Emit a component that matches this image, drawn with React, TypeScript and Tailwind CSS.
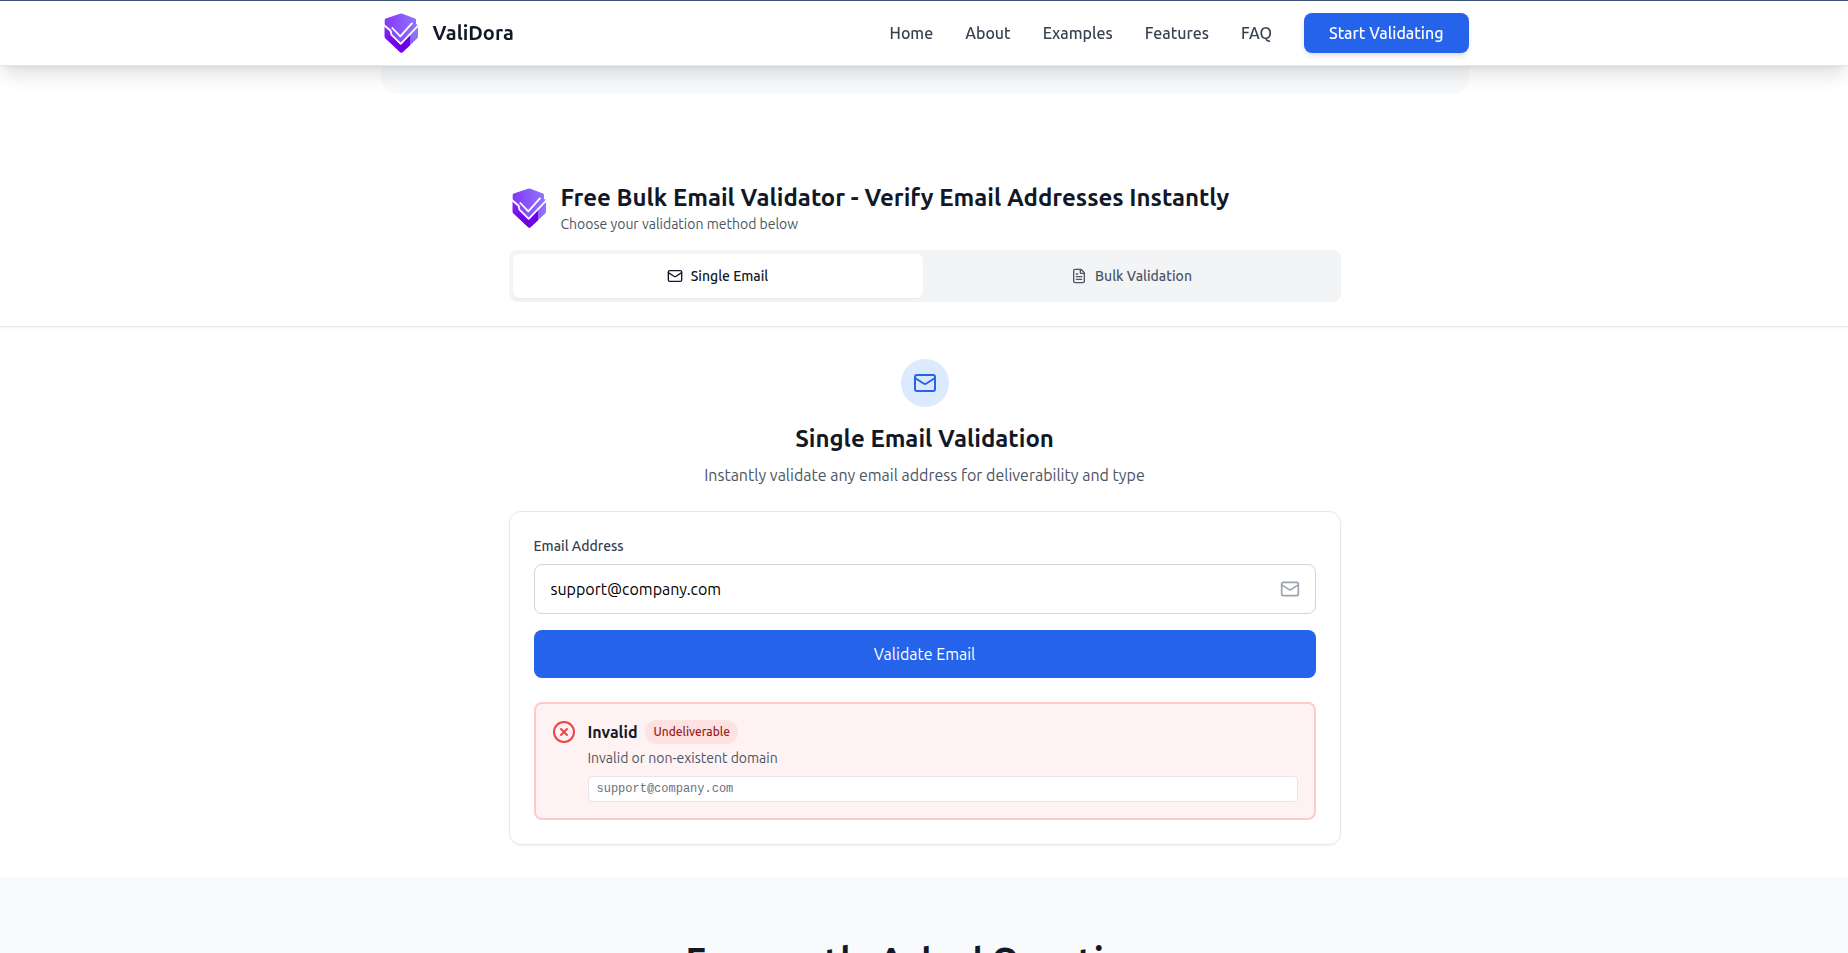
import { useId } from "react";
import { CircleX, FileText, Mail } from "lucide-react";

const navLinks = ["Home", "About", "Examples", "Features", "FAQ"];

function Logo() {
  const id = useId();
  return (
    <svg viewBox="0 0 40 40" className="size-10 shrink-0" aria-hidden="true">
      <defs>
        <linearGradient id={`${id}-top`} x1="0" y1="0.3" x2="1" y2="0.2">
          <stop offset="0" stopColor="#8238f8" />
          <stop offset="1" stopColor="#9277ff" />
        </linearGradient>
        <linearGradient id={`${id}-low`} x1="0" y1="0" x2="0.6" y2="1">
          <stop offset="0" stopColor="#8a2bf5" />
          <stop offset="0.7" stopColor="#7200e6" />
        </linearGradient>
      </defs>
      <path
        d="M19 .8a3 3 0 0 1 2.4 0L34 5.4a1.5 1.5 0 0 1 1 1.4V11l2 1v11.8a2 2 0 0 1-.6 1.4L21.8 39.1a2 2 0 0 1-2.8 0L4.3 25.2a2 2 0 0 1-.6-1.4V7a1.5 1.5 0 0 1 1-1.4Z"
        fill={`url(#${id}-top)`}
      />
      <path
        d="M3.7 13 9.7 20l10 11L29 22v10.3L21.8 39.1a2 2 0 0 1-2.8 0L4.3 25.2a2 2 0 0 1-.6-1.4Z"
        fill={`url(#${id}-low)`}
      />
      <g fill="none" stroke="#fff" strokeWidth="1.8" strokeLinecap="round" strokeLinejoin="round">
        <path d="M3.2 12.2 9.6 17.8 10.4 21.6 19.7 30.8 37.4 12.4" />
        <path d="M11.3 15 19.3 23.4 30.9 10.4" />
      </g>
    </svg>
  );
}

export default function App() {
  return (
    <div className="h-screen overflow-hidden bg-white font-[Ubuntu,'Open_Sans',sans-serif] text-base text-[#111827]">
      <header className="sticky top-0 z-10 border-t border-b border-t-[#3a5377] border-b-[#e5e7eb] bg-white pl-px shadow-[0_12px_18px_-3px_rgb(0_0_0/0.12),0_4px_6px_-4px_rgb(0_0_0/0.1)]">
        <div className="mx-auto flex h-16 max-w-6xl items-center justify-between px-8">
          <a href="#home" className="flex items-center gap-3 text-xl font-semibold">
            <Logo />
            ValiDora
          </a>
          <nav className="flex items-center gap-8 font-medium text-[#374151]">
            {navLinks.map((label) => (
              <a key={label} href={`#${label.toLowerCase()}`}>
                {label}
              </a>
            ))}
            <button
              type="button"
              className="rounded-lg bg-[#2563eb] px-[25px] py-2 text-white shadow-md"
            >
              Start Validating
            </button>
          </nav>
        </div>
      </header>

      <main>
        <section className="pb-16 pl-px">
          <div className="mx-auto max-w-6xl px-8">
            <div className="h-7 rounded-b-2xl bg-slate-50" />
          </div>
        </section>

        <section className="border-b border-[#e5e7eb] py-6 pl-px shadow-xs">
          <div className="mx-auto max-w-4xl px-8">
            <div className="mb-4 flex items-center gap-3">
              <Logo />
              <div>
                <h1 className="text-2xl font-semibold">
                  Free Bulk Email Validator - Verify Email Addresses Instantly
                </h1>
                <p className="text-sm text-[#4b5563]">Choose your validation method below</p>
              </div>
            </div>
            <div role="tablist" className="flex gap-1 rounded-lg bg-[#f3f4f6] p-1 text-sm font-medium">
              <button
                type="button"
                role="tab"
                aria-selected="true"
                className="flex flex-1 items-center justify-center gap-2 rounded-md bg-white py-3 shadow-xs"
              >
                <Mail className="size-4" />
                Single Email
              </button>
              <button
                type="button"
                role="tab"
                aria-selected="false"
                className="flex flex-1 items-center justify-center gap-2 rounded-md py-3 text-[#4b5563]"
              >
                <FileText className="size-4" />
                Bulk Validation
              </button>
            </div>
          </div>
        </section>

        <section className="py-8 pl-px">
          <div className="mx-auto max-w-4xl px-8">
            <div className="mb-6 flex flex-col items-center text-center">
              <div className="mb-4 flex size-12 items-center justify-center rounded-full bg-[#dbeafe] text-[#2563eb]">
                <Mail className="size-6" />
              </div>
              <h2 className="mb-2 text-2xl font-semibold">Single Email Validation</h2>
              <p className="text-[#4b5563]">
                Instantly validate any email address for deliverability and type
              </p>
            </div>

            <div className="rounded-xl border border-[#e5e7eb] p-6 shadow-xs">
              <form onSubmit={(e) => e.preventDefault()}>
                <label htmlFor="email" className="mb-2 block text-sm font-medium text-[#374151]">
                  Email Address
                </label>
                <div className="relative mb-4">
                  <input
                    id="email"
                    type="email"
                    defaultValue="support@company.com"
                    className="block w-full rounded-lg border border-[#d1d5db] py-3 pr-12 pl-4 text-black"
                  />
                  <Mail className="absolute inset-y-0 right-4 my-auto size-5 text-[#9ca3af]" />
                </div>
                <button type="submit" className="block w-full rounded-lg bg-[#2563eb] py-3 text-white">
                  Validate Email
                </button>
              </form>

              <div
                role="alert"
                className="mt-6 flex items-start gap-3 rounded-lg border-2 border-[#fecaca] bg-[#fef2f2] p-4"
              >
                <CircleX className="size-6 shrink-0 text-[#ef4444]" />
                <div className="flex-1">
                  <div className="mb-1 flex items-center gap-2">
                    <h3 className="font-semibold">Invalid</h3>
                    <span className="rounded-full bg-[#fee2e2] px-2 py-1 text-xs font-medium text-[#991b1b]">
                      Undeliverable
                    </span>
                  </div>
                  <p className="mb-2 text-sm text-[#4b5563]">Invalid or non-existent domain</p>
                  <p className="rounded-sm border border-[#e5e7eb] bg-white px-2 py-1 font-['Liberation_Mono',monospace] text-xs text-[#6b7280]">
                    support@company.com
                  </p>
                </div>
              </div>
            </div>
          </div>
        </section>

        <section className="bg-slate-50 py-16 pl-px">
          <h2 className="text-center text-4xl font-semibold">Frequently Asked Questions</h2>
        </section>
      </main>
    </div>
  );
}
